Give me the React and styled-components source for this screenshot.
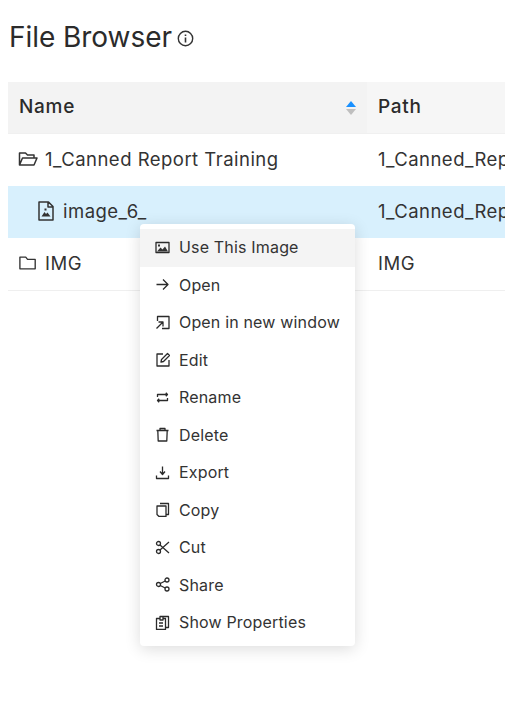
import styled, { createGlobalStyle } from "styled-components";

const GlobalStyle = createGlobalStyle`
  html, body {
    margin: 0;
    background: #fff;
    overflow: hidden;
  }
  body {
    font-family: "Inter", "Liberation Sans", sans-serif;
    color: #333;
  }
`;

const Page = styled.div`
  position: relative;
  width: 505px;
  height: 701px;
  overflow: hidden;
  padding: 16px 0 0 8px;
  box-sizing: border-box;
`;

const TitleRow = styled.div`
  display: flex;
  align-items: center;
  gap: 5px;
  height: 40px;
  margin-bottom: 26px;
  padding-left: 1px;
`;

const Title = styled.h1`
  margin: 2px 0 0;
  font-size: 28px;
  font-weight: 400;
  line-height: 40px;
  letter-spacing: -0.05px;
  color: #2b2b2b;
`;

const InfoIcon = styled.svg`
  width: 17px;
  height: 17px;
  margin-top: 5px;
  fill: none;
  stroke: #333;
`;

const Table = styled.div`
  width: 620px;
`;

const HeaderRow = styled.div`
  display: grid;
  grid-template-columns: 359px 1fr;
  height: 52px;
  background: #f5f5f5;
  border-bottom: 1px solid #f0f0f0;
  box-sizing: border-box;
`;

const HeaderCell = styled.div`
  display: flex;
  align-items: center;
  justify-content: space-between;
  padding: 0 11px 2px;
  font-size: 19px;
  font-weight: 500;
  letter-spacing: 0.7px;
  color: #2b2b2b;
  background: ${(p) => (p.$sorted ? "#f3f3f3" : "#f6f6f6")};
`;

const Sorter = styled.span`
  display: flex;
  flex-direction: column;
  gap: 2px;
  margin-top: 2px;
`;

const SortArrow = styled.i`
  width: 0;
  height: 0;
  border-left: 5.5px solid transparent;
  border-right: 5.5px solid transparent;
  ${(p) =>
    p.$up
      ? "border-bottom: 6px solid #1890ff;"
      : "border-top: 6px solid #bfbfbf;"}
`;

const Row = styled.div`
  display: grid;
  grid-template-columns: 359px 1fr;
  height: ${(p) => p.$height || 52}px;
  padding-bottom: ${(p) => p.$lift ?? 2}px;
  align-items: center;
  background: ${(p) => (p.$selected ? "#d8f0fd" : "#fff")};
  border-bottom: ${(p) => (p.$bordered ? "1px solid #efefef" : "none")};
  box-sizing: border-box;
  font-size: 18.5px;
  letter-spacing: 0.48px;
`;

const NameCell = styled.div`
  display: flex;
  align-items: center;
  gap: ${(p) => p.$gap || 7}px;
  padding-left: ${(p) => p.$indent || 10}px;
`;

const PathCell = styled.div`
  padding-left: 11px;
  white-space: nowrap;
`;

const RowIcon = styled.svg`
  width: ${(p) => p.$w || 20}px;
  height: ${(p) => p.$h || 20}px;
  flex: none;
  fill: none;
  stroke: #333;
  stroke-width: 1.5;
  stroke-linejoin: round;
`;

const Menu = styled.ul`
  position: absolute;
  left: 140px;
  top: 224px;
  width: 215px;
  height: 422px;
  margin: 0;
  padding: 5px 0 0;
  box-sizing: border-box;
  list-style: none;
  background: #fff;
  border-radius: 4px;
  box-shadow: 0 3px 16px rgba(0, 0, 0, 0.14);
`;

const MenuItem = styled.li`
  display: flex;
  align-items: center;
  gap: 9px;
  height: 37.5px;
  padding: 0 0 1px 15px;
  box-sizing: border-box;
  font-size: 16px;
  letter-spacing: 0.17px;
  white-space: nowrap;
  color: #333;
  background: ${(p) => (p.$active ? "#f4f4f4" : "transparent")};
`;

const MenuGlyph = styled.svg`
  width: 15px;
  height: 15px;
  flex: none;
  fill: none;
  stroke: #2b2b2b;
  stroke-width: 1.3;
  stroke-linejoin: round;
`;

const Filled = styled.path`
  fill: #333;
  stroke: none;
`;

const icons = {
  image: (
    <>
      <rect x="1" y="2.5" width="13" height="10" />
      <Filled d="M2 11.5 L5.5 7.5 L7.5 9.5 L10 6.5 L13 11.5 Z" />
      <Filled d="M3 4.5 h2 v2 h-2 Z" />
    </>
  ),
  open: <path d="M1.5 7.5 H13 M8 2.5 L13 7.5 L8 12.5" />,
  newWindow: (
    <path d="M2.5 6 V1.5 H14 V13.5 H7 M1.5 13.5 L7.5 7.5 M3.5 7 H8 V11.5" />
  ),
  edit: (
    <path d="M8 2 H2 V14 H14 V8 M6 10 L6.5 7.5 L12.5 1.5 L14.5 3.5 L8.5 9.5 Z" />
  ),
  rename: (
    <path d="M2.5 7 V4.5 H12.5 M10.8 2.8 L12.5 4.5 L10.8 6.2 M12.5 8 V10.5 H2.5 M4.2 8.8 L2.5 10.5 L4.2 12.2" />
  ),
  delete: (
    <path d="M1.5 3.5 H13.5 M5 3.5 V1.5 H10 V3.5 M2.8 3.5 L3.2 14 H11.8 L12.2 3.5" />
  ),
  export: (
    <path d="M7.5 1.5 V9 M5 6.5 L7.5 9.5 L10 6.5 M1.5 10.5 V13.5 H13.5 V10.5" />
  ),
  copy: (
    <path d="M5 1.5 H13.5 V12.5 H11 M2 4 H11 V14.5 H4 L2 12.5 Z" />
  ),
  cut: (
    <>
      <circle cx="3.5" cy="3.5" r="2" />
      <circle cx="3.5" cy="11.5" r="2" />
      <path d="M5 5 L14 13 M5 10 L14 2" />
    </>
  ),
  share: (
    <>
      <circle cx="3.5" cy="7.5" r="2" />
      <circle cx="12" cy="3" r="2" />
      <circle cx="12" cy="12" r="2" />
      <path d="M5.3 6.5 L10.2 4 M5.3 8.5 L10.2 11" />
    </>
  ),
  properties: (
    <path d="M5 3.5 H1.5 V14.5 H10.5 V3.5 H8 M5 1.5 V5 H8 V1.5 Z M8 1.5 H13.5 V12.5 H10.5 M4 8 H8 M4 11 H8" />
  ),
};

const menuItems = [
  { label: "Use This Image", icon: "image", active: true },
  { label: "Open", icon: "open" },
  { label: "Open in new window", icon: "newWindow" },
  { label: "Edit", icon: "edit" },
  { label: "Rename", icon: "rename" },
  { label: "Delete", icon: "delete" },
  { label: "Export", icon: "export" },
  { label: "Copy", icon: "copy" },
  { label: "Cut", icon: "cut" },
  { label: "Share", icon: "share" },
  { label: "Show Properties", icon: "properties" },
];

const App = () => {
  return (
    <Page>
      <GlobalStyle />
      <TitleRow>
        <Title>File Browser</Title>
        <InfoIcon viewBox="0 0 17 17">
          <circle cx="8.5" cy="8.5" r="7.2" strokeWidth="1.4" />
          <path d="M8.5 7.5 V12.5 M8.5 4.5 V6" strokeWidth="1.6" />
        </InfoIcon>
      </TitleRow>
      <Table>
        <HeaderRow>
          <HeaderCell $sorted>
            Name
            <Sorter>
              <SortArrow $up />
              <SortArrow />
            </Sorter>
          </HeaderCell>
          <HeaderCell>Path</HeaderCell>
        </HeaderRow>
        <Row $lift={3}>
          <NameCell>
            <RowIcon viewBox="0 0 20 20">
              <path d="M1.5 16 V4 H7.5 L9.5 6 H16 V9 M1.5 16 L4.5 9 H19 L16 16 Z" />
            </RowIcon>
            1_Canned Report Training
          </NameCell>
          <PathCell>1_Canned_Report_Training</PathCell>
        </Row>
        <Row $selected>
          <NameCell $indent={30} $gap={9}>
            <RowIcon viewBox="0 0 16 20" $w={16} $h={20}>
              <path d="M1 1 H10.5 L15 5.5 V19 H1 Z M10 1 V6 H15" />
              <Filled d="M3.5 15.5 L6.5 11 L8 13 L9.5 11.5 L12.5 15.5 Z" />
              <Filled d="M6.5 7.5 h2 v2 h-2 Z" />
            </RowIcon>
            image_6_
          </NameCell>
          <PathCell>1_Canned_Report_Training</PathCell>
        </Row>
        <Row $height={53} $bordered>
          <NameCell $indent={11} $gap={8}>
            <RowIcon viewBox="0 0 20 20" $w={18} $h={18}>
              <path d="M1 16.5 V3.5 H7.5 L9.5 6 H18 V16.5 Z" />
            </RowIcon>
            IMG
          </NameCell>
          <PathCell>IMG</PathCell>
        </Row>
      </Table>
      <Menu>
        {menuItems.map((item) => (
          <MenuItem key={item.label} $active={item.active}>
            <MenuGlyph viewBox="0 0 15 15">{icons[item.icon]}</MenuGlyph>
            {item.label}
          </MenuItem>
        ))}
      </Menu>
    </Page>
  );
};

export default App;
